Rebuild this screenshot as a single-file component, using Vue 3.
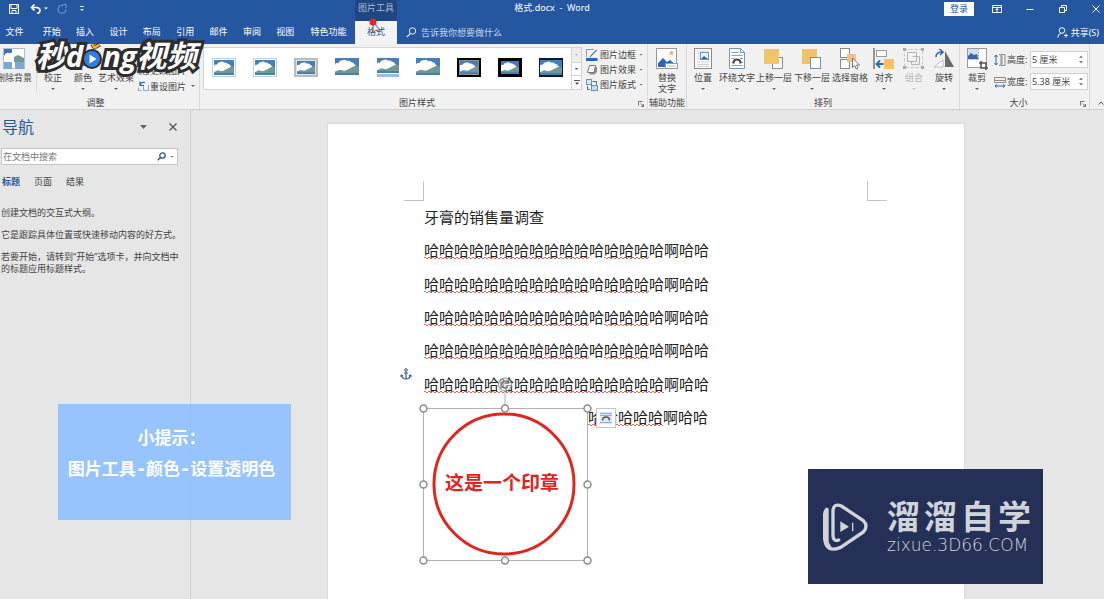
<script setup>
import { ref } from 'vue'

const tabs = ['开始', '插入', '设计', '布局', '引用', '邮件', '审阅', '视图']
const styles = ['thin', 'thin', 'grey', 'plain', 'mirror', 'plain', 'double', 'thick', 'black']
const pictureTools = [
  { id: 'border', text: '图片边框' },
  { id: 'effect', text: '图片效果' },
  { id: 'layout', text: '图片版式' },
]
const arrange = [
  { id: 'position', text: '位置', size: 'w32', menu: true },
  { id: 'wrap', text: '环绕文字', size: 'w36', menu: true },
  { id: 'forward', text: '上移一层', size: 'w38', menu: true },
  { id: 'backward', text: '下移一层', size: 'w38', menu: true },
  { id: 'pane', text: '选择窗格', size: 'w38', menu: false },
  { id: 'align', text: '对齐', size: 'w30', menu: true },
  { id: 'group', text: '组合', size: 'w30', menu: true, off: true },
  { id: 'rotate', text: '旋转', size: 'w30', menu: true },
]
const lines = [
  [['哈哈哈哈哈哈哈哈哈哈哈', true], ['哈', false], ['哈哈哈', true], ['哈啊哈哈', false]],
  [['哈哈哈哈哈哈哈哈哈哈哈', true], ['哈', false], ['哈哈哈', true], ['哈啊哈哈', false]],
  [['哈哈哈哈哈哈哈哈哈哈哈', true], ['哈', false], ['哈哈哈', true], ['哈啊哈哈', false]],
  [['哈哈哈哈哈哈哈哈哈哈哈', true], ['哈', false], ['哈哈哈', true], ['哈啊哈哈', false]],
  [['哈哈哈哈哈哈哈哈哈哈哈哈哈哈哈哈', true], ['啊哈哈', false]],
  [['哈哈哈哈哈', true], ['啊哈哈', false]],
]
const height = ref('5 厘米')
const width = ref('5.38 厘米')
const query = ref('')
</script>

<template>
  <div class="app">
    <svg class="defs" aria-hidden="true">
      <symbol id="photo" viewBox="0 0 22 16" preserveAspectRatio="none">
        <rect width="22" height="16" fill="#4a7db8" />
        <path d="M0 13V6q1-2 3-1 1-3 4-3 3-1 4 1 2-1 4 1 2 0 3 2l2 2 2 1v4H0z" fill="#fff" />
        <path d="M0 13l4-2 5 1 4-2 4-2 2-1 3 2v5H0z" fill="#6f9a93" />
        <path d="M0 14h22v2H0z" fill="#4a7db8" />
      </symbol>
    </svg>

    <header class="head">
      <div class="titlebar">
        <div class="left">
          <div class="quick">
            <button class="bare" aria-label="保存">
              <svg width="10" height="10" viewBox="0 0 10 10"><path d="M.5.5h9v9h-9zM2 .5v4h6v-4M3 9.500V6.500h4v3" fill="none" stroke="#fff" /></svg>
            </button>
            <button class="bare undo" aria-label="撤消">
              <svg width="18" height="10" viewBox="0 0 18 10"><path d="M4.500.5L1.500 3.500l3 3M2 3.500h5q3 .5 3 3t-3 3" fill="none" stroke="#fff" stroke-width="1.600" /><path d="M14 3.500h4l-2 2z" fill="#fff" /></svg>
            </button>
            <button class="bare redo" aria-label="重复">
              <svg width="10" height="10" viewBox="0 0 10 10"><path d="M6 1.500A4 4 0 1 0 9 5M5.500.5H9v3.500" fill="none" stroke="#6d8fc4" stroke-width="1.200" /></svg>
            </button>
            <button class="bare more" aria-label="自定义快速访问工具栏">
              <svg width="4" height="6" viewBox="0 0 4 6"><path d="M0 .5h4" stroke="#dce6f5" /><path d="M0 3h4L2 5z" fill="#dce6f5" /></svg>
            </button>
          </div>
          <span class="context">图片工具</span>
        </div>
        <div class="title">格式.docx&nbsp; -&nbsp; Word</div>
        <div class="right">
          <button class="login">登录</button>
          <div class="win">
            <button class="bare" aria-label="功能区显示选项">
              <svg width="14" height="10" viewBox="0 0 14 10"><path d="M2.500 1.500h9v7h-9zM2.500 3.500h9M7 8V4.500M5.500 6L7 4.500 8.500 6" fill="none" stroke="#fff" /></svg>
            </button>
            <button class="bare" aria-label="最小化">
              <svg width="14" height="10" viewBox="0 0 14 10"><path d="M3.500 5.500h7" stroke="#fff" /></svg>
            </button>
            <button class="bare" aria-label="还原">
              <svg width="14" height="10" viewBox="0 0 14 10"><path d="M3.500 3.500h5v5h-5zM5.500 3V1.500h5v5H9" fill="none" stroke="#fff" /></svg>
            </button>
            <button class="bare" aria-label="关闭">
              <svg width="14" height="10" viewBox="0 0 14 10"><path d="M3.500 1.500l7 7M10.500 1.500l-7 7" stroke="#fff" /></svg>
            </button>
          </div>
        </div>
      </div>
      <nav class="tabs">
        <button class="tab file">文件</button>
        <div class="main-tabs">
          <button v-for="t in tabs" :key="t" class="tab">{{ t }}</button>
        </div>
        <button class="tab special">特色功能</button>
        <button class="tab active">格式</button>
        <button class="tell">
          <svg width="11" height="11" viewBox="0 0 11 11"><circle cx="6.500" cy="4" r="3.200" fill="none" stroke="#e4ecf8" /><path d="M4.300 6.500L.8 10.200" stroke="#e4ecf8" stroke-width="1.200" /></svg>
          告诉我你想要做什么
        </button>
        <button class="share">
          <svg width="11" height="11" viewBox="0 0 11 11"><circle cx="5" cy="3.500" r="2.800" fill="none" stroke="#fff" /><path d="M.8 10.500q.3-3.500 3-4M7 8.500h4M9 6.500v4" fill="none" stroke="#fff" /></svg>
          共享(S)
        </button>
      </nav>
    </header>

    <section class="ribbon">
      <div class="group adjust">
        <div class="body">
          <button class="big w28">
            <svg width="22" height="22" viewBox="0 0 22 22"><rect x=".5" y=".5" width="21" height="20" fill="#fff" stroke="#a9bdd4" /><rect x="1" y="1" width="8" height="11" fill="#3f74b3" /><path d="M1 8q2-4 5-3t4-3v10H1z" fill="#fff" /><path d="M11 9l4-2 6 3v4H11z" fill="#6f9a93" /><path d="M1 14h8v7H1zM12 14h9v7h-9z" fill="#7fa6d1" /></svg>
            <span class="cap">删除背景</span>
          </button>
          <i class="rule"></i>
          <button class="big w30">
            <svg width="22" height="22" viewBox="0 0 22 22"><circle cx="11" cy="11" r="7" fill="#7fa6d1" /></svg>
            <span class="cap">校正</span><i class="caret"></i>
          </button>
          <button class="big w30">
            <svg width="22" height="22" viewBox="0 0 22 22"><use href="#photo" x="1" y="3" width="20" height="15" /></svg>
            <span class="cap">颜色</span><i class="caret"></i>
          </button>
          <button class="big w36">
            <svg width="22" height="22" viewBox="0 0 22 22"><use href="#photo" x="1" y="3" width="20" height="15" /></svg>
            <span class="cap">艺术效果</span><i class="caret"></i>
          </button>
          <div class="rows low">
            <button class="small">
              <svg width="11" height="11" viewBox="0 0 11 11"><path d="M1 1v8h3M1 1h4l2 2" fill="none" stroke="#3f74b3" /><path d="M5.500 4.500h5v5h-5z" fill="#fff" stroke="#8a8a8a" /></svg>
              更改图片<i class="caret"></i>
            </button>
            <button class="small">
              <svg width="11" height="11" viewBox="0 0 11 11"><path d="M2 .5v4h4M2 4.500q1-4 5-3" fill="none" stroke="#2b66b0" stroke-width="1.200" /><path d="M5.500 5V9.500h5V4M.5 6.500v3h3" fill="none" stroke="#8fa9c8" /></svg>
              重设图片<i class="caret"></i>
            </button>
          </div>
        </div>
        <div class="name">调整</div>
      </div>

      <div class="group picstyle">
        <div class="body">
          <div class="gallery">
            <div class="thumbs">
              <button v-for="(s, i) in styles" :key="i" class="thumb" :aria-label="'图片样式 ' + (i + 1)">
                <svg width="26" height="22" viewBox="0 0 26 22">
                  <template v-if="s === 'thin'">
                    <rect x="1.500" y="1.500" width="23" height="18" fill="#fff" stroke="#b9d3ee" /><use href="#photo" x="3" y="3" width="20" height="15" />
                  </template>
                  <template v-else-if="s === 'grey'">
                    <rect x="1" y="1" width="24" height="19" fill="#b9bcbc" /><rect x="3" y="3" width="20" height="15" fill="#dfe2e2" /><use href="#photo" x="4" y="4" width="18" height="13" />
                  </template>
                  <template v-else-if="s === 'plain'">
                    <use href="#photo" x="1" y="1" width="24" height="17" />
                  </template>
                  <template v-else-if="s === 'mirror'">
                    <use href="#photo" x="2" y="1" width="22" height="15" /><rect x="2" y="17" width="22" height="3" fill="#9cbbe8" />
                  </template>
                  <template v-else-if="s === 'double'">
                    <rect x="2" y="2" width="22" height="17" fill="#8c8f92" stroke="#000" stroke-width="2" /><use href="#photo" x="4" y="4" width="18" height="13" />
                  </template>
                  <template v-else-if="s === 'thick'">
                    <rect x="1" y="1" width="24" height="19" fill="#000" /><use href="#photo" x="4" y="4" width="18" height="13" />
                  </template>
                  <template v-else>
                    <rect x="1" y="1" width="24" height="19" fill="#0b1a2c" /><use href="#photo" x="2" y="3" width="22" height="15" />
                  </template>
                </svg>
              </button>
            </div>
            <div class="scroll">
              <button class="bare" aria-label="上一行"><i class="caret dim"></i></button>
              <button class="bare" aria-label="下一行"><i class="caret"></i></button>
              <button class="bare" aria-label="其他"><svg width="6" height="6" viewBox="0 0 6 6"><path d="M0 .5h6" stroke="#555" /><path d="M1 2.500h4L3 5z" fill="#555" /></svg></button>
            </div>
          </div>
          <div class="rows">
            <button v-for="p in pictureTools" :key="p.id" class="small">
              <svg width="12" height="12" viewBox="0 0 12 12">
                <g v-if="p.id === 'border'"><path d="M8 .5H.5V8" fill="none" stroke="#9a9a9a" /><path d="M10.500.5l-6 6-1.500 2 2-1 6-6z" fill="#3d6ca8" /><path d="M0 9h11.500v3H0z" fill="#2b66b0" /></g>
                <g v-else-if="p.id === 'effect'"><path d="M3 10.500h5.500L11 8V3.500L9 2z" fill="#8b8d90" /><path d="M3.500 1.500h6L8 8.500H1.500z" fill="#fff" stroke="#777" stroke-linejoin="round" /></g>
                <g v-else><rect x=".5" y=".5" width="5" height="5" fill="#dbe6f3" stroke="#6e8fb8" /><path d="M6.500 2.500h4v3M5 5l3 3" fill="none" stroke="#3d6ca8" /><rect x="5.500" y="6.500" width="6" height="5" fill="#c9d9ec" stroke="#6e8fb8" /><path d="M1.500 7v3.500H4" fill="none" stroke="#3d6ca8" /></g>
              </svg>
              {{ p.text }}<i class="caret"></i>
            </button>
          </div>
        </div>
        <div class="name">图片样式</div>
        <button class="launch" aria-label="设置图片格式"><svg width="6" height="6" viewBox="0 0 6 6"><path d="M.5 4.500v-4h4M2.500 2.500l3 3M5.500 3v2.500H3" fill="none" stroke="#777" /></svg></button>
      </div>

      <div class="group access">
        <div class="body">
          <button class="big w38">
            <svg width="22" height="22" viewBox="0 0 22 22"><rect x=".5" y=".5" width="20" height="20" fill="#fff" stroke="#9a9a9a" /><circle cx="15.500" cy="5" r="2" fill="#efb384" /><path d="M2 19v-4l5-5 4 4 3-2 5 4v3z" fill="#2f66ad" /><rect x="9.500" y="15.500" width="12" height="5" fill="#fff" stroke="#9a9a9a" /><path d="M11 18h9" stroke="#bbb" /></svg>
            <span class="cap">替换<br />文字</span>
          </button>
        </div>
        <div class="name">辅助功能</div>
      </div>

      <div class="group">
        <div class="body">
          <button v-for="a in arrange" :key="a.id" class="big" :class="[a.size, { off: a.off }]" :disabled="a.off">
            <svg width="22" height="22" viewBox="0 0 22 22">
              <g v-if="a.id === 'position'"><rect x="2.500" y=".5" width="17" height="20" fill="#fff" stroke="#8a8a8a" /><path d="M5 3h12M5 14h12M5 16.500h12M5 18.500h12M5 5.500h3M5 8h3M5 10.500h3" stroke="#c9d3df" /><rect x="8.500" y="4.500" width="8" height="7" fill="#e9f1fa" stroke="#6f93c1" /><path d="M9 11l3-3 4 3z" fill="#2f66ad" /></g>
              <g v-else-if="a.id === 'wrap'"><path d="M3.500.5h11l4 4v16h-15z" fill="#fff" stroke="#7d95b3" /><path d="M14.500.5v4h4" fill="none" stroke="#7d95b3" /><path d="M5.500 4.500h7M5.500 7.500h11M5.500 10.500h3M14 10.500h3M5.500 17.500h11M5.500 14.500h2M15 14.500h2" stroke="#7ca4d8" /><path d="M7.500 15.500q0-4 3.500-4t3.500 4" fill="none" stroke="#444" stroke-width="2" /></g>
              <g v-else-if="a.id === 'forward'"><rect x="9.500" y="9.500" width="10" height="11" fill="#fff" stroke="#8a8a8a" /><rect x="1" y="1" width="15" height="15" fill="#f3c36c" /></g>
              <g v-else-if="a.id === 'backward'"><rect x="1" y="1" width="15" height="15" fill="#f3c36c" /><rect x="9.500" y="9.500" width="10" height="11" fill="#fff" stroke="#6e8fb8" /></g>
              <g v-else-if="a.id === 'pane'"><rect x="1.500" y=".5" width="9" height="9" fill="#fff" stroke="#8a8a8a" /><rect x="1.500" y="11.500" width="9" height="9" fill="#fff" stroke="#8a8a8a" /><rect x="8" y="6" width="9" height="8" fill="#f5c087" /><path d="M13.500 10v9.500l2.200-2 1.500 3.500 1.800-.8-1.500-3.200h3z" fill="#fff" stroke="#777" /></g>
              <g v-else-if="a.id === 'align'"><path d="M1 0v21" stroke="#777" stroke-width="1.500" /><rect x="3.500" y="2.500" width="10" height="6" fill="#fff" stroke="#9a9a9a" /><rect x="11" y="11" width="10" height="10" fill="#f7c163" /><path d="M10.500 16H4M7 12.500L3.500 16 7 19.500" fill="none" stroke="#2f66ad" stroke-width="1.800" /></g>
              <g v-else-if="a.id === 'group'"><rect x="1.500" y="1.500" width="18" height="18" fill="none" stroke="#c4c4c4" stroke-dasharray="3 2" /><path d="M4.500 4.500h9v9h-9zM9.500 8.500h7v8h-8v-3" fill="none" stroke="#b4b4b4" /><path d="M0 0h3v3H0zM18 0h3v3h-3zM0 18h3v3H0zM18 18h3v3h-3z" fill="#aaa" /></g>
              <g v-else><path d="M12 3v16h9z" fill="#6b6b6b" /><path d="M10 12v7H1z" fill="#fff" stroke="#bbb" /><path d="M3 9q0-5 6-5M6.500 1L10 4 7 7" fill="none" stroke="#2f66ad" stroke-width="1.600" /></g>
            </svg>
            <span class="cap">{{ a.text }}</span><i v-if="a.menu" class="caret"></i>
          </button>
        </div>
        <div class="name">排列</div>
      </div>

      <div class="group sizes">
        <div class="body">
          <button class="big w34">
            <svg width="22" height="22" viewBox="0 0 22 22"><rect x="1.500" y=".5" width="19" height="19" fill="#fff" stroke="#9a9a9a" /><rect x="2" y="1" width="10" height="10" fill="#cfe0f3" /><path d="M2 11V8l3-3 3 2 3-1 1 5z" fill="#2f66ad" /><path d="M12.500.5v11h-11" fill="none" stroke="#aaa" stroke-dasharray="2 1" /><path d="M15 13v7h7M13 15h7v7" fill="none" stroke="#555" stroke-width="1.600" /></svg>
            <span class="cap">裁剪</span><i class="caret"></i>
          </button>
          <div class="fields">
            <div class="field">
              <svg width="12" height="12" viewBox="0 0 12 12"><path d="M2 1.500v9M.5 3L2 1l1.500 2M.5 9L2 11l1.500-2" fill="none" stroke="#2f66ad" /><path d="M5 .5h2v11H5M8 .5h3v11H8z" fill="none" stroke="#8a8a8a" /></svg>
              <label for="h">高度:</label>
              <span class="spin"><input id="h" v-model="height" type="text" /><span class="arrows"><i class="caret up"></i><i class="caret"></i></span></span>
            </div>
            <div class="field">
              <svg width="12" height="12" viewBox="0 0 12 12"><path d="M.5 1.500h11v3H.5zM.5 4.500v2h11v-2" fill="none" stroke="#8a8a8a" /><path d="M1 10h10M3 8.500L1 10l2 1.500M9 8.500l2 1.500-2 1.500" fill="none" stroke="#2f66ad" /></svg>
              <label for="w">宽度:</label>
              <span class="spin"><input id="w" v-model="width" type="text" /><span class="arrows"><i class="caret up"></i><i class="caret"></i></span></span>
            </div>
          </div>
        </div>
        <div class="name">大小</div>
        <button class="launch" aria-label="高级版式大小"><svg width="6" height="6" viewBox="0 0 6 6"><path d="M.5 4.500v-4h4M2.500 2.500l3 3M5.500 3v2.500H3" fill="none" stroke="#777" /></svg></button>
      </div>
      <button class="fold" aria-label="折叠功能区"><svg width="6" height="4" viewBox="0 0 6 4"><path d="M.5 3.500L3 1l2.500 2.500" fill="none" stroke="#555" /></svg></button>
    </section>

    <main class="work">
      <aside class="pane">
        <div class="pane-head">
          <h2>导航</h2>
          <button class="bare" aria-label="窗格选项"><svg width="7" height="4" viewBox="0 0 7 4"><path d="M0 0h7L3.500 4z" fill="#666" /></svg></button>
          <button class="bare x" aria-label="关闭窗格"><svg width="8" height="8" viewBox="0 0 8 8"><path d="M.5.5l7 7M7.500.5l-7 7" stroke="#555" stroke-width="1.200" /></svg></button>
        </div>
        <div class="find">
          <input v-model="query" type="text" placeholder="在文档中搜索" aria-label="在文档中搜索" />
          <svg width="9" height="9" viewBox="0 0 9 9"><circle cx="5.500" cy="3.500" r="2.700" fill="none" stroke="#2b579a" stroke-width="1.300" /><path d="M3.500 5.500L.7 8.300" stroke="#2b579a" stroke-width="1.500" /></svg>
          <i class="caret"></i>
        </div>
        <div class="pane-tabs">
          <button class="bare on">标题</button>
          <button class="bare">页面</button>
          <button class="bare">结果</button>
        </div>
        <div class="hints">
          <p>创建文档的交互式大纲。</p>
          <p>它是跟踪具体位置或快速移动内容的好方式。</p>
          <p>若要开始，请转到“开始”选项卡，并向文档中<br />的标题应用标题样式。</p>
        </div>
      </aside>

      <div class="canvas">
        <article class="page">
          <div class="marks"><i class="mark l"></i><i class="mark r"></i></div>
          <div class="text">
            <p>牙膏的销售量调查</p>
            <p v-for="(line, i) in lines" :key="i" :class="{ wrapped: i === 5 }"><span v-for="(run, j) in line" :key="j" :class="{ typo: run[1] }">{{ run[0] }}</span></p>
          </div>

          <svg class="anchor" width="12" height="12" viewBox="0 0 12 12"><circle cx="6" cy="2" r="1.300" fill="none" stroke="#2f5f9f" /><path d="M6 3.500v7.500M4 5h4M1.500 7q.5 4 4.500 4t4.500-4M.5 8.500l1-1.500 1.500 1M11.500 8.500l-1-1.500L9 8" fill="none" stroke="#2f5f9f" stroke-width="1.200" /></svg>

          <div class="stamp">
            <svg width="174" height="188" viewBox="0 0 174 188">
              <circle cx="86" cy="107" r="70" fill="none" stroke="#e0251f" stroke-width="3" />
              <path d="M5.500 31.500h164v152H5.500zM87 14v15" fill="none" stroke="#b0b0b0" />
              <g fill="#fff" stroke="#8c8c8c" stroke-width="1.500">
                <circle cx="5.500" cy="31.500" r="3.500" /><circle cx="87" cy="31.500" r="3.500" /><circle cx="169.500" cy="31.500" r="3.500" />
                <circle cx="5.500" cy="107.500" r="3.500" /><circle cx="169.500" cy="107.500" r="3.500" />
                <circle cx="5.500" cy="183.500" r="3.500" /><circle cx="87" cy="183.500" r="3.500" /><circle cx="169.500" cy="183.500" r="3.500" />
              </g>
              <circle cx="87" cy="7.500" r="6.500" fill="#fff" fill-opacity=".5" stroke="#8c8c8c" />
              <path d="M90 5.500a3.500 3.500 0 1 0 0 4M90.500 3v3h-3" fill="none" stroke="#777" stroke-width="1.500" />
            </svg>
            <span class="stamp-text">这是一个印章</span>
          </div>
          <button class="options" aria-label="布局选项">
            <svg width="12" height="12" viewBox="0 0 12 12"><rect width="12" height="12" fill="#dce8f6" /><path d="M0 1.500h12M0 3.500h12M0 10.500h12" stroke="#8fb0da" /><path d="M2.500 8.500q0-3.500 3.500-3.500t3.500 3.500" fill="none" stroke="#555" stroke-width="1.500" /></svg>
          </button>
        </article>
      </div>
    </main>

    <div class="brand">
      <span class="han">秒</span><span class="lat">d</span>
      <svg width="20" height="26" viewBox="0 0 20 26"><circle cx="9" cy="16" r="10" fill="#2d2d2d" /><circle cx="9" cy="16" r="8" fill="#2f7de8" /><path d="M6.500 11.500l7 4.500-7 4.500z" fill="#fff" /><path d="M9 1l2.500 3.500L17 1.500" fill="none" stroke="#2d2d2d" stroke-width="4" /><path d="M9 1l2.500 3.500L17 1.500" fill="none" stroke="#f6a94a" stroke-width="2.500" /></svg>
      <span class="lat">ng</span><span class="han">视频</span>
    </div>

    <svg class="pointer" width="14" height="18" viewBox="0 0 14 18"><path d="M4 4v11l2.500-2.500L11 12z" fill="#e8eef7" stroke="#555" /><circle cx="4" cy="4" r="3.500" fill="#e5271e" /></svg>

    <div class="tip">
      <p>小提示：</p>
      <p>图片工具-颜色-设置透明色</p>
    </div>

    <div class="badge">
      <svg width="48" height="50" viewBox="0 0 144 150"><path d="M50 114Q33 120 33 100V26Q35 3 58 12L124 56Q140 72 124 90L56 136Q12 154 8 110V36Q9 28 14 22" fill="none" stroke="#d0d3d9" stroke-width="10" stroke-linecap="round" stroke-linejoin="round" /><path d="M8 34V112Q10 138 32 142L20 120V20z" fill="#d0d3d9" /><path d="M55 58l26 16-26 16z" fill="#d0d3d9" /><path d="M92 62v26" stroke="#d0d3d9" stroke-width="4" /></svg>
      <div class="badge-text">
        <strong>溜溜自学</strong>
        <span>zixue.3D66.COM</span>
      </div>
    </div>
  </div>
</template>

<style>
html, body, #app { height: 100%; }
body { margin: 0; overflow: hidden; }
</style>

<style scoped>
* { box-sizing: border-box; }
.app {
  position: relative;
  display: flex;
  flex-direction: column;
  height: 100%;
  overflow: hidden;
  background: #e6e6e6;
  color: #444;
  font-family: "Noto Sans", "Noto Sans CJK SC", sans-serif;
  font-size: 9px;
  line-height: 11px;
}
.defs { position: absolute; width: 0; height: 0; }
svg { display: block; flex: none; }
p, h2 { margin: 0; }
button, input { font: inherit; color: inherit; border: 0; padding: 0; margin: 0; background: none; }
button { white-space: nowrap; }
.bare { display: flex; align-items: center; justify-content: center; }
.caret { flex: none; width: 4px; height: 2px; background: #666; clip-path: polygon(0 0, 100% 0, 50% 100%); }
.caret.up { clip-path: polygon(50% 0, 100% 100%, 0 100%); }
.caret.dim { background: #bbb; }

.head { background: #2556a0; color: #fff; }
.titlebar { display: grid; grid-template-columns: 1fr auto 1fr; height: 21px; }
.left { display: flex; }
.quick { display: flex; align-items: center; width: 355px; height: 18px; padding-left: 9px; }
.undo { margin-left: 11px; }
.redo { margin-left: 9px; }
.more { margin-left: 13px; }
.context { width: 42px; background: #20467f; color: #a3b8d9; line-height: 16px; text-align: center; }
.title { line-height: 16px; }
.right { display: flex; justify-content: flex-end; align-items: center; gap: 16px; height: 17px; padding-right: 1px; }
.login { width: 30px; height: 14px; background: #fff; color: #2556a0; }
.win { display: flex; gap: 19px; }
.tabs { display: flex; height: 23px; }
.main-tabs { display: flex; width: 267px; }
.tab { line-height: 21px; height: 23px; padding-bottom: 2px; }
.main-tabs .tab { flex: 1; }
.file { width: 35px; padding-right: 6px; }
.special { width: 53px; }
.tab.active { width: 42px; background: #f3f3f3; color: #2556a0; }
.tell { display: flex; align-items: center; gap: 4px; height: 23px; margin-left: 9px; color: #c5d3ea; }
.share { display: flex; align-items: center; gap: 3px; height: 23px; margin-left: auto; padding-right: 5px; }

.ribbon { display: flex; height: 66px; background: #f1f1f1; border-bottom: 1px solid #d2d2d2; }
.group { position: relative; display: flex; flex-direction: column; border-right: 1px solid #dcdcdc; }
.body { display: flex; flex: 1; }
.name { line-height: 12px; text-align: center; }
.adjust { width: 200px; }
.adjust .name { padding-right: 8px; }
.picstyle { flex: 1; }
.picstyle .name { padding-right: 13px; }
.access { width: 39px; }
.sizes { width: 130px; }
.sizes .name { padding-right: 12px; }
.big { display: flex; flex-direction: column; align-items: center; padding-top: 4px; }
.big .cap { margin-top: 2px; }
.big .caret { margin-top: 5px; }
.big.off { color: #b4b4b4; }
.big.off .caret { background: #c4c4c4; }
.w28 { width: 28px; }
.w30 { width: 30px; }
.w32 { width: 32px; }
.w34 { width: 34px; }
.w36 { width: 36px; }
.w38 { width: 38px; }
.rule { width: 1px; height: 42px; margin: 5px 1px 0 8px; background: #dcdcdc; }
.rows { display: flex; flex-direction: column; padding: 3px 0 0 4px; }
.rows.low { padding-top: 18px; }
.small { display: flex; align-items: center; gap: 2px; height: 15px; }
.low .small { height: 16px; gap: 1px; }
.small .caret { margin-left: 1px; }
.low .small .caret { margin-left: 4px; }
.gallery { display: flex; flex: 1; height: 43px; margin: 3px 0 0 3px; background: #fff; border: 1px solid #d4d4d4; }
.thumbs { display: flex; flex: 1; }
.thumb { display: flex; flex: 1; align-items: center; justify-content: center; padding-bottom: 2px; }
.scroll { display: grid; width: 10px; grid-template-rows: 1fr 1fr 1fr; border-left: 1px solid #d4d4d4; }
.scroll .bare + .bare { border-top: 1px solid #d4d4d4; }
.scroll .bare:first-child { background: #ededed; }
.picstyle .rows { width: 65px; }
.launch { position: absolute; right: 3px; bottom: 2px; }
.fields { display: flex; flex-direction: column; gap: 5px; padding-top: 7px; }
.field { display: flex; align-items: center; gap: 1px; height: 17px; }
.field label { width: 20px; white-space: nowrap; }
.spin { display: flex; width: 58px; height: 17px; margin-left: 2px; border: 1px solid #d0d0d0; background: #fff; }
.spin input { flex: 1; min-width: 0; padding-left: 1px; }
.arrows { display: flex; flex-direction: column; justify-content: space-around; width: 8px; padding: 2px 0; }
.fold { align-self: flex-end; margin-left: 8px; padding-bottom: 4px; width: 6px; }

.work { display: flex; flex: 1; min-height: 0; }
.pane { width: 191px; border-right: 1px solid #cfcfcf; }
.pane-head { display: flex; align-items: center; height: 20px; margin-top: 7px; padding-left: 2px; }
.pane-head h2 { flex: 1; color: #2b579a; font-size: 16px; line-height: 20px; font-weight: 400; }
.x { margin: 0 13px 0 22px; }
.find { display: flex; align-items: center; height: 17px; margin: 11px 12px 0 1px; padding-right: 3px; border: 1px solid #c6c6c6; background: #fff; }
.find input { flex: 1; min-width: 0; padding-left: 1px; }
.find input::placeholder { color: #777; opacity: 1; }
.find .caret { margin-left: 4px; }
.pane-tabs { display: flex; gap: 14px; margin-top: 11px; padding-left: 2px; }
.on { color: #2b579a; font-weight: 700; }
.hints { display: flex; flex-direction: column; gap: 10px; margin-top: 20px; padding-left: 1px; line-height: 12px; white-space: nowrap; }

.canvas { flex: 1; padding: 14px 3px 0 0; }
.page { position: relative; width: 636px; height: 100%; margin: 0 auto; background: #fff; box-shadow: 0 0 1px 1px #dcdcdc; }
.marks { display: flex; justify-content: space-between; padding: 57px 77px 0 76px; }
.mark { width: 20px; height: 20px; border-bottom: 1px solid #c2c2c2; }
.mark.l { border-right: 1px solid #c2c2c2; }
.mark.r { border-left: 1px solid #c2c2c2; }
.text { display: grid; grid-template-rows: repeat(7, 1fr); align-items: center; height: 234px; margin-top: -1px; padding-left: 96px; color: #222; font-family: "Noto Sans CJK SC", sans-serif; font-size: 15px; line-height: 20px; font-weight: 400; white-space: nowrap; }
.wrapped { padding-left: 164px; }
.typo {
  background:
    repeating-linear-gradient(90deg, #e8675f 0 2px, transparent 2px 4px) left bottom 2px / 100% 1px no-repeat,
    repeating-linear-gradient(90deg, transparent 0 2px, #e8675f 2px 4px) left bottom 1px / 100% 1px no-repeat;
}
.anchor { position: absolute; left: 72px; top: 244px; }
.stamp { position: absolute; left: 90px; top: 253px; width: 174px; }
.stamp-text { position: absolute; left: 0; right: 6px; top: 94px; text-align: center; color: #e0251f; font-size: 19px; line-height: 24px; font-weight: 700; }
.options { position: absolute; left: 268px; top: 284px; display: flex; align-items: center; justify-content: center; width: 20px; height: 20px; background: #fff; border: 1px solid #c4c4c4; }

.brand { position: absolute; left: 36px; top: 38px; display: flex; align-items: center; height: 36px; font-style: italic; font-weight: 700; color: #fff; -webkit-text-stroke: 6px #2d2d2d; paint-order: stroke fill; white-space: nowrap; }
.han { font-size: 30px; line-height: 36px; }
.lat { font-family: "Open Sans", sans-serif; font-size: 29px; line-height: 36px; }
.brand svg { position: relative; z-index: 1; }
.pointer { position: absolute; left: 369px; top: 18px; }
.tip { position: absolute; left: 58px; top: 404px; width: 233px; height: 116px; padding: 19px 6px 0 0; background: rgba(146, 193, 254, 0.94); color: #fff; text-align: center; font-family: "DejaVu Sans Mono", "Noto Sans CJK SC", sans-serif; font-size: 17px; line-height: 31px; font-weight: 700; white-space: nowrap; }
.badge { position: absolute; right: 61px; bottom: 15px; display: flex; align-items: center; gap: 17px; width: 235px; height: 115px; padding-left: 14px; background: #243056; color: #d0d3d9; }
.badge-text { display: flex; flex-direction: column; width: 144px; }
.badge strong { font-size: 33px; line-height: 36px; text-align-last: justify; }
.badge-text span { font-family: "DejaVu Sans", sans-serif; font-size: 17px; line-height: 20px; font-weight: 200; white-space: nowrap; }
</style>
